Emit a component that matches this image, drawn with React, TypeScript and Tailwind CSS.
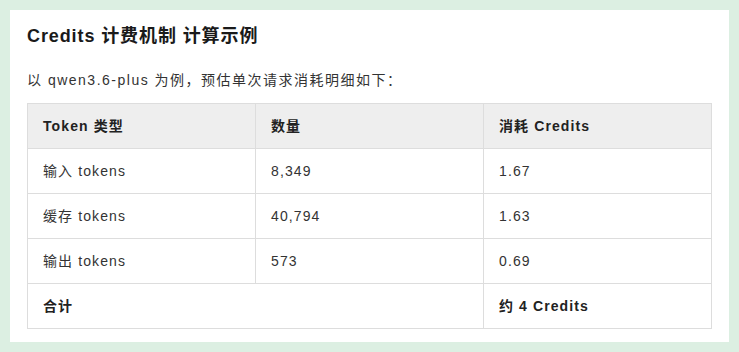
import React from "react";

const rows = [
  ["输入 tokens", "8,349", "1.67"],
  ["缓存 tokens", "40,794", "1.63"],
  ["输出 tokens", "573", "0.69"],
];

export default function App() {
  return (
    <div
      className="w-[739px] h-[352px] bg-[#dcefe2] p-[10px]"
      style={{ fontFamily: '"Liberation Sans", Arial, "Noto Sans CJK SC", sans-serif' }}
    >
      <div className="bg-white h-[332px] px-[17px] pt-[13px]">
        <h2 className="text-[18px] leading-[26px] font-bold tracking-[0.9px] text-[#1a1a1a]">Credits 计费机制 计算示例</h2>
        <p className="mt-[20px] text-[14px] leading-[22px] tracking-[1.5px] text-[#333]">
          以 qwen3.6-plus 为例，预估单次请求消耗明细如下：
        </p>
        <table className="mt-[12px] w-[684px] table-fixed border-collapse text-[14px] tracking-[1.1px] text-[#333]">
          <thead>
            <tr className="h-[45px] bg-[#eeeeee]">
              <th className="w-[228px] border border-[#dddddd] px-[15px] text-left font-bold text-[#222]">Token 类型</th>
              <th className="w-[228px] border border-[#dddddd] px-[15px] text-left font-bold text-[#222]">数量</th>
              <th className="w-[228px] border border-[#dddddd] px-[15px] text-left font-bold text-[#222]">消耗 Credits</th>
            </tr>
          </thead>
          <tbody>
            {rows.map((r) => (
              <tr key={r[0]} className="h-[45px]">
                {r.map((c, i) => (
                  <td key={i} className="border border-[#dddddd] px-[15px]">{c}</td>
                ))}
              </tr>
            ))}
            <tr className="h-[45px]">
              <td colSpan={2} className="border border-[#dddddd] px-[15px] font-bold text-[#222]">合计</td>
              <td className="border border-[#dddddd] px-[15px] font-bold text-[#222]">约 4 Credits</td>
            </tr>
          </tbody>
        </table>
      </div>
    </div>
  );
}
